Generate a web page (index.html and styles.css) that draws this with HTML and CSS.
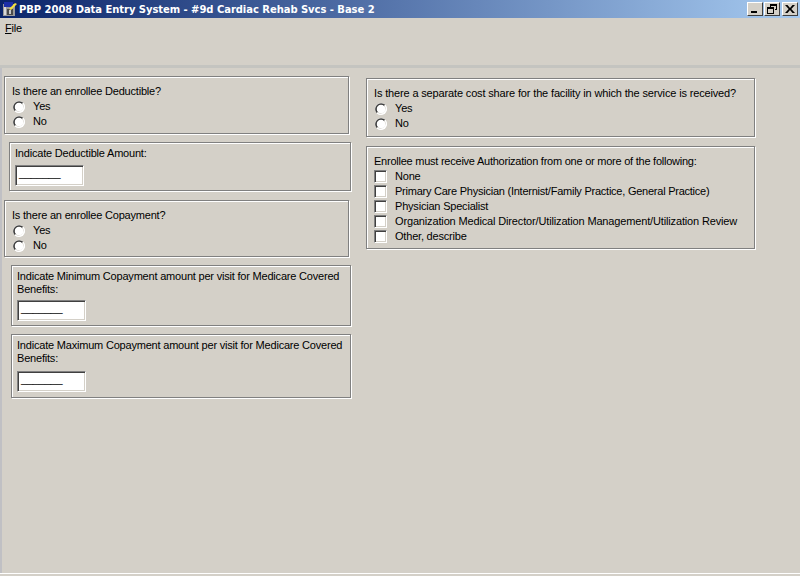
FILE: index.html
```html
<!DOCTYPE html>
<html lang="en">
<head>
<meta charset="utf-8">
<title>PBP 2008 Data Entry System</title>
<link rel="stylesheet" href="styles.css">
</head>
<body>
<svg class="defs" width="0" height="0" aria-hidden="true">
  <symbol id="radio" viewBox="0 0 12 12">
    <circle cx="6" cy="6" r="6" fill="#fff"/>
    <path d="M1.76 10.24A6 6 0 0 1 10.24 1.76L8.83 3.17A4 4 0 0 0 3.17 8.83Z" fill="#404040"/>
    <path d="M10.24 1.76A6 6 0 0 1 1.76 10.24L2.5 9.5A5 5 0 0 0 9.5 2.5Z" fill="#fff"/>
    <path d="M9.5 2.5A5 5 0 0 1 2.5 9.5L3.17 8.83A4 4 0 0 0 8.83 3.17Z" fill="#d4d0c8"/>
    <circle cx="6" cy="6" r="4" fill="#fff"/>
  </symbol>
</svg>
<header class="titlebar">
  <svg class="appicon" width="16" height="16" viewBox="0 0 16 16" aria-hidden="true">
    <path d="M1 3h12v12H1z" fill="#9a9a9a"/>
    <path d="M2 1h9v5H2z" fill="#1c2fa8"/>
    <path d="M2 6h2v8H2z" fill="#d8d8d8"/>
    <path d="M5 8h6v6H5z" fill="#4a4a4a"/>
    <path d="M7 9h2v4H7z" fill="#c8c8c8"/>
    <path d="M7 8l6-6 2 1-6 6z" fill="#f4e23c"/>
  </svg>
  <span class="title">PBP 2008 Data Entry System - #9d Cardiac Rehab Svcs - Base 2</span>
  <div class="winbtns">
    <div class="winbtn"><svg width="14" height="12" viewBox="0 0 14 12"><path d="M3 8h6v2H3z" fill="#000"/></svg></div>
    <div class="winbtn"><svg width="14" height="12" viewBox="0 0 14 12"><path d="M5 1h7v6h-2V6h1V3H6v1H5zM2 4h7v7H2zM3 6v4h5V6z" fill="#000" fill-rule="evenodd"/></svg></div>
    <div class="winbtn winbtn-close"><svg width="14" height="12" viewBox="0 0 14 12"><path d="M2 2h2.500L7 5l2.500-3H12L8.300 6 12 10H9.500L7 7 4.500 10H2L5.700 6z" fill="#000"/></svg></div>
  </div>
</header>
<nav class="menubar"><span class="menuitem"><u>F</u>ile</span></nav>
<div class="toolband"></div>
<main class="content">
  <div class="col col-left">
    <section class="group g-ded">
      <p class="q">Is there an enrollee Deductible?</p>
      <label class="opt"><svg class="radio"><use href="#radio"/></svg><span>Yes</span></label>
      <label class="opt"><svg class="radio"><use href="#radio"/></svg><span>No</span></label>
    </section>
    <section class="group g-amt">
      <p class="q">Indicate Deductible Amount:</p>
      <div class="field">_______</div>
    </section>
    <section class="group g-cop">
      <p class="q">Is there an enrollee Copayment?</p>
      <label class="opt"><svg class="radio"><use href="#radio"/></svg><span>Yes</span></label>
      <label class="opt"><svg class="radio"><use href="#radio"/></svg><span>No</span></label>
    </section>
    <section class="group g-min">
      <p class="q">Indicate Minimum Copayment amount per visit for Medicare Covered Benefits:</p>
      <div class="field">_______</div>
    </section>
    <section class="group g-max">
      <p class="q">Indicate Maximum Copayment amount per visit for Medicare Covered Benefits:</p>
      <div class="field">_______</div>
    </section>
  </div>
  <div class="col col-right">
    <section class="group g-fac">
      <p class="q loose">Is there a separate cost share for the facility in which the service is received?</p>
      <label class="opt"><svg class="radio"><use href="#radio"/></svg><span>Yes</span></label>
      <label class="opt"><svg class="radio"><use href="#radio"/></svg><span>No</span></label>
    </section>
    <section class="group g-auth">
      <p class="q tight">Enrollee must receive Authorization from one or more of the following:</p>
      <label class="opt"><span class="check"></span><span>None</span></label>
      <label class="opt"><span class="check"></span><span class="tight">Primary Care Physician (Internist/Family Practice, General Practice)</span></label>
      <label class="opt"><span class="check"></span><span>Physician Specialist</span></label>
      <label class="opt"><span class="check"></span><span class="loose">Organization Medical Director/Utilization Management/Utilization Review</span></label>
      <label class="opt"><span class="check"></span><span>Other, describe</span></label>
    </section>
  </div>
</main>
<div class="bottomedge"></div>
</body>
</html>
```
FILE: styles.css
```css
* { box-sizing: border-box; }
html, body { height: 100%; }
body {
  margin: 0;
  width: 800px;
  height: 576px;
  overflow: hidden;
  display: flex;
  flex-direction: column;
  background: #d4d0c8;
  font-family: "Liberation Sans", Arial, sans-serif;
  font-size: 11px;
  letter-spacing: -0.2px;
  color: #000;
}
.defs { position: absolute; }
.titlebar {
  height: 18px;
  flex: none;
  display: flex;
  align-items: center;
  padding: 0 2px;
  background: linear-gradient(to right, #0a246a, #a6caf0);
}
.appicon { flex: none; margin-right: 1px; }
.title {
  font-family: "DejaVu Sans", Verdana, sans-serif;
  font-weight: 700;
  font-size: 10px;
  letter-spacing: -0.05px;
  color: #fff;
  white-space: nowrap;
}
.winbtns { margin-left: auto; display: flex; }
.winbtn {
  width: 16px;
  height: 14px;
  margin-left: 1px;
  background: #d4d0c8;
  border-top: 1px solid #fff;
  border-left: 1px solid #fff;
  border-right: 1px solid #404040;
  border-bottom: 1px solid #404040;
  display: flex;
  overflow: hidden;
}
.winbtn-close { margin-left: 2px; }
.menubar { height: 47px; flex: none; padding: 3px 0 0 5px; line-height: 14px; }
.toolband { height: 3px; flex: none; background: #c4c4c0; }
.content {
  flex: 1;
  display: flex;
  border-left: 2px solid #c0c0c4;
  min-height: 0;
}
.col { display: flex; flex-direction: column; }
.col-left { width: 349px; padding-top: 8px; }
.col-right { padding-top: 10px; margin-left: 15px; }
.group {
  border: 1px solid #808080;
  box-shadow: inset 1px 1px 0 #fff, 1px 1px 0 #fff;
  padding: 7px 7px 0;
  line-height: 15px;
}
.q { margin: 0; white-space: nowrap; }
.loose { letter-spacing: -0.15px; }
.tight { letter-spacing: -0.24px; }
.opt { display: flex; align-items: center; height: 15px; }
.radio { width: 12px; height: 12px; flex: none; margin: 0 8px 0 1px; }
.check {
  width: 13px;
  height: 13px;
  flex: none;
  margin-right: 8px;
  background: #fff;
  border-top: 1px solid #808080;
  border-left: 1px solid #808080;
  border-right: 1px solid #fff;
  border-bottom: 1px solid #fff;
  box-shadow: inset 1px 1px 0 #404040, inset -1px -1px 0 #d4d0c8;
}
.field {
  width: 69px;
  height: 21px;
  background: #fff;
  border-top: 1px solid #808080;
  border-left: 1px solid #808080;
  border-right: 1px solid #fff;
  border-bottom: 1px solid #fff;
  box-shadow: inset 1px 1px 0 #404040, inset -1px -1px 0 #d4d0c8;
  padding-left: 3px;
  line-height: 15px;
  overflow: hidden;
}
.g-ded { margin-left: 2px; width: 345px; height: 58px; }
.g-amt { margin: 8px 0 0 7px; width: 342px; height: 49px; padding: 4px 5px 0; }
.g-amt .q { line-height: 13px; margin-bottom: 5px; }
.g-cop { margin: 9px 0 0 2px; width: 345px; height: 57px; }
.g-min { margin: 8px 0 0 9px; width: 340px; height: 61px; padding: 4px 5px 0; }
.g-min .q { white-space: normal; line-height: 13px; margin-bottom: 4px; }
.g-max { margin: 8px 0 0 9px; width: 340px; height: 64px; padding: 4px 5px 0; }
.g-max .q { white-space: normal; line-height: 13px; margin-bottom: 6px; }
.g-fac { width: 389px; height: 59px; }
.g-auth { margin-top: 9px; width: 389px; height: 103px; }
.bottomedge { height: 3px; flex: none; border-top: 1px solid #fff; }
```
